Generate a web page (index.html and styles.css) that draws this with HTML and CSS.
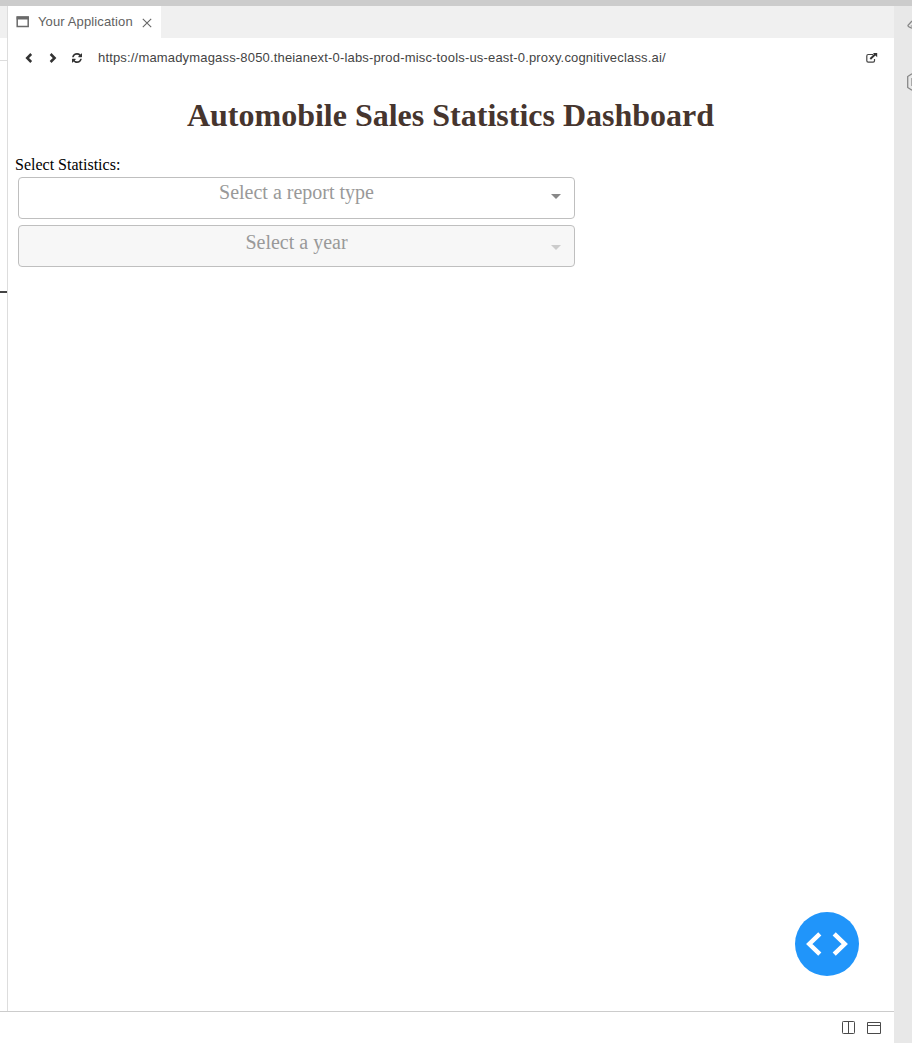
FILE: index.html
```html
<!DOCTYPE html>
<html lang="en">
<head>
<meta charset="utf-8">
<title>Your Application</title>
<link rel="stylesheet" href="styles.css">
</head>
<body>
<div class="top-strip"></div>
<div class="workspace">
  <div class="main">
    <div class="panels">
      <div class="editor-edge"><div class="edge-tabs"></div><div class="edge-toolbar"></div><div class="edge-mark"></div></div>
      <section class="preview">
        <div class="tabs">
          <div class="tab">
            <svg class="tab-icon" width="14" height="12" viewBox="0 0 14 12"><path d="M1.2 1h11v9.6h-11z" fill="none" stroke="#6a6a6a" stroke-width="1.5"/><path d="M.6.5h12.2v3H.6z" fill="#6a6a6a"/></svg>
            <span class="tab-label">Your Application</span>
            <svg class="tab-close" width="10" height="10" viewBox="0 0 10 10"><path d="M.8.8l8.4 8.4M9.2.8L.8 9.2" stroke="#666" stroke-width="1.1"/></svg>
          </div>
        </div>
        <div class="toolbar">
          <svg class="nav" width="8" height="10" viewBox="0 0 8 10"><path d="M6.2 1L2.2 5l4 4" fill="none" stroke="#333" stroke-width="2.5"/></svg>
          <svg class="nav next" width="8" height="10" viewBox="0 0 8 10"><path d="M1.6 1l4 4-4 4" fill="none" stroke="#333" stroke-width="2.5"/></svg>
          <svg class="reload" width="10" height="10" viewBox="0 0 1536 1536"><path fill="#333" d="M1511 928q0 5-1 7-64 268-268 434.500T764 1536q-146 0-282.500-55T238 1324l-129 129q-19 19-45 19t-45-19-19-45V960q0-26 19-45t45-19h448q26 0 45 19t19 45-19 45l-137 137q71 66 161 102t187 36q134 0 250-65t186-179q11-17 53-117 8-23 30-23h192q13 0 22.500 9.500t9.500 22.500zm25-800v448q0 26-19 45t-45 19h-448q-26 0-45-19t-19-45 19-45l138-138Q969 256 768 256q-134 0-250 65T332 500q-11 17-53 117-8 23-30 23H50q-13 0-22.500-9.500T18 608v-7q65-268 270-434.500T768 0q146 0 284 55.500T1297 212l130-129q19-19 45-19t45 19 19 45z"/></svg>
          <span class="url">https://mamadymagass-8050.theianext-0-labs-prod-misc-tools-us-east-0.proxy.cognitiveclass.ai/</span>
          <svg class="open" width="12" height="10" viewBox="0 0 12 10"><path d="M7 1.500H2.200Q.8 1.500.8 2.900v4.800q0 1.400 1.400 1.400h4.900q1.400 0 1.400-1.400V6" fill="none" stroke="#444" stroke-width="1.2"/><path d="M4.300 6L9.500 1" stroke="#333" stroke-width="1.9"/><path d="M6.900 0h4.300v4.300z" fill="#333"/></svg>
        </div>
        <div class="page">
          <h1>Automobile Sales Statistics Dashboard</h1>
          <label class="field-label">Select Statistics:</label>
          <div class="select"><span>Select a report type</span><i class="arrow"></i></div>
          <div class="select disabled"><span>Select a year</span><i class="arrow"></i></div>
          <button class="debug" aria-label="Debug menu"><svg width="42" height="24" viewBox="0 0 42 24"><path d="M13.800 1.800L3.300 12l10.500 10.200M28.200 1.800L38.700 12 28.200 22.200" fill="none" stroke="#fff" stroke-width="4.500"/></svg></button>
        </div>
      </section>
    </div>
    <footer class="status">
      <svg width="13" height="13" viewBox="0 0 13 13"><rect x=".5" y=".5" width="12" height="12" rx=".8" fill="none" stroke="#4a4a4a"/><path d="M6.500 .5v12" stroke="#4a4a4a"/></svg>
      <svg width="14" height="13" viewBox="0 0 14 13"><path d="M.5 1.500h13v11H.5zM.5 4.500h13" fill="none" stroke="#4a4a4a"/></svg>
    </footer>
  </div>
  <aside class="activity">
    <svg width="5" height="10" viewBox="0 0 5 10"><path d="M5 1L1 5.200Q.6 6.800 5 8.200" fill="none" stroke="#888" stroke-width="1.3"/><path d="M3 6l2-1v2z" fill="#aaa"/></svg>
    <svg class="hex" width="5" height="18" viewBox="0 0 5 18"><path d="M5 .7L.7 3.500v11L5 17.300" fill="none" stroke="#888" stroke-width="1.3"/><path d="M4.500 5v8" stroke="#aaa"/></svg>
  </aside>
</div>
</body>
</html>
```
FILE: styles.css
```css
* { box-sizing: border-box; }
body { margin: 0; height: 1043px; overflow: hidden; display: flex; flex-direction: column; background: #fff; font-family: "Liberation Sans", Arial, sans-serif; }
svg { display: block; flex: none; }
.top-strip { height: 6px; flex: none; background: #ccc; }
.workspace { flex: 1; display: flex; }
.main { flex: 1; display: flex; flex-direction: column; min-width: 0; }
.panels { flex: 1; display: flex; }
.editor-edge { width: 8px; border-right: 1px solid #ddd; }
.edge-tabs { height: 32px; background: #f0f0f0; }
.edge-toolbar { height: 23px; border-bottom: 1px solid #ddd; }
.edge-mark { height: 2px; margin-top: 230px; background: #444; }
.preview { flex: 1; display: flex; flex-direction: column; min-width: 0; }
.tabs { height: 32px; background: #f0f0f0; display: flex; }
.tab { width: 153px; background: #fff; display: flex; align-items: center; padding-left: 8px; color: #616161; font-size: 13px; }
.tab-label { margin-left: 8px; padding-bottom: 2px; width: 95px; white-space: nowrap; letter-spacing: .13px; }
.tab-close { margin: 2px 0 0 9px; }
.toolbar { height: 40px; display: flex; align-items: center; padding: 0 16px 0 17px; }
.next { margin-left: 16px; }
.reload { margin-left: 15px; }
.url { margin-left: 16px; padding-bottom: 2px; color: #444; font-size: 13px; letter-spacing: .172px; white-space: nowrap; }
.open { margin-left: auto; }
.page { flex: 1; position: relative; padding-left: 7px; font-family: "Liberation Serif", "Times New Roman", serif; }
h1 { margin: 19px 8px 0 0; text-align: center; font-size: 32px; line-height: 37px; color: #46352e; }
.field-label { display: block; margin-top: 21px; font-size: 16px; line-height: 20px; color: #000; }
.select { width: 557px; height: 42px; margin: 2px 0 0 3px; border: 1px solid #bfbfbf; border-radius: 4px; position: relative; text-align: center; font-size: 20px; line-height: 28px; color: #999; }
.disabled { margin-top: 6px; background: #f7f7f7; line-height: 33px; }
.arrow { position: absolute; right: 13px; top: 16px; border: 5px solid transparent; border-top-color: #888; border-bottom: 0; }
.disabled .arrow { top: 19px; border-top-color: #ccc; }
.debug { position: absolute; right: 35px; bottom: 35px; width: 64px; height: 64px; padding: 0; border: 0; border-radius: 50%; background: #2095fa; display: grid; place-items: center; }
.status { height: 32px; border-top: 1px solid #ccc; display: flex; justify-content: flex-end; align-items: center; gap: 12px; padding-right: 13px; }
.activity { width: 18px; background: #e8e8e8; padding: 14px 0 0 13px; }
.hex { margin-top: 43px; }
```
